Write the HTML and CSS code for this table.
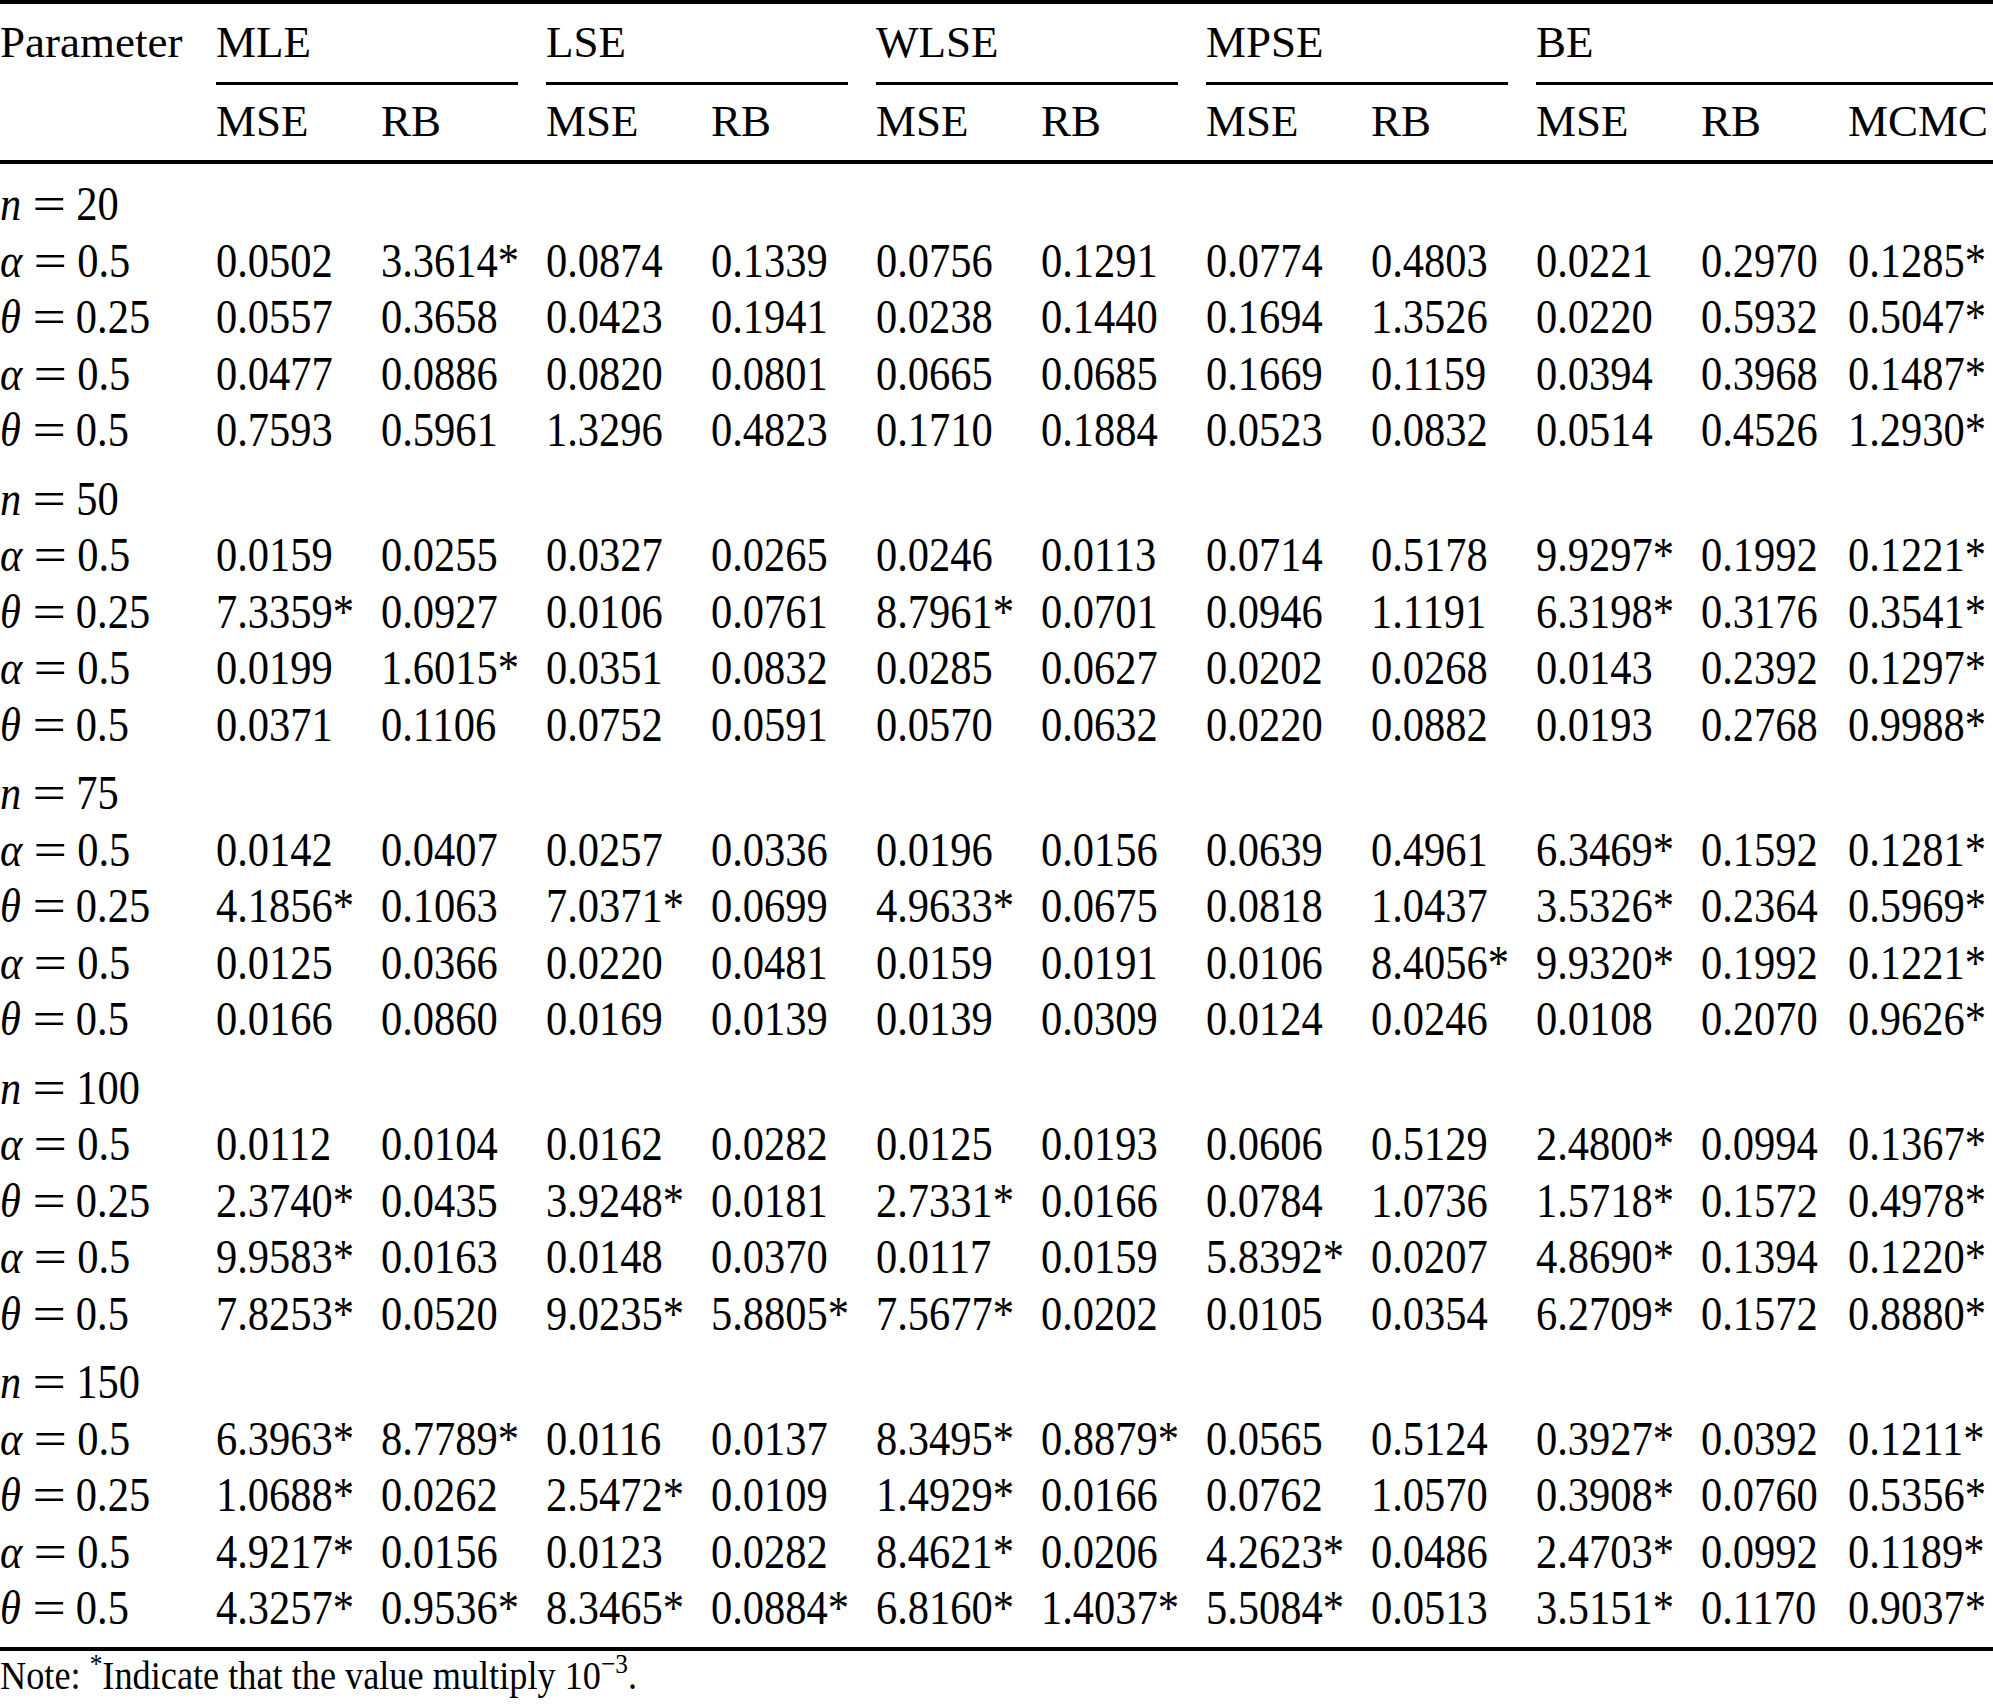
FILE: index.html
```html
<!DOCTYPE html>
<html lang="en">
<head>
    <meta charset="UTF-8">
    <meta name="viewport" content="width=device-width, initial-scale=1.0">
    <title>Simulation Results</title>
    <link rel="stylesheet" href="styles.css">
</head>
<body>
    <table class="results">
        <colgroup>
            <col class="col-param">
            <col class="col-est" span="9">
            <col class="col-rb">
            <col class="col-mcmc">
        </colgroup>
        <thead>
            <tr class="top-head">
                <th class="param-head" rowspan="2">Parameter</th>
                <th colspan="2"><div class="group-label">MLE</div></th>
                <th colspan="2"><div class="group-label">LSE</div></th>
                <th colspan="2"><div class="group-label">WLSE</div></th>
                <th colspan="2"><div class="group-label">MPSE</div></th>
                <th colspan="3"><div class="group-label last">BE</div></th>
            </tr>
            <tr class="sub-head">
                <th>MSE</th><th>RB</th>
                <th>MSE</th><th>RB</th>
                <th>MSE</th><th>RB</th>
                <th>MSE</th><th>RB</th>
                <th>MSE</th><th>RB</th><th>MCMC</th>
            </tr>
        </thead>
        <tbody id="results-body"></tbody>
    </table>
    <p class="note">Note: <sup>*</sup>Indicate that the value multiply 10<sup>&minus;3</sup>.</p>

    <script>
        const params = [["α", "0.5"], ["θ", "0.25"], ["α", "0.5"], ["θ", "0.5"]];

        const groups = [
            { n: 20, rows: [
                ["0.0502", "3.3614*", "0.0874", "0.1339", "0.0756", "0.1291", "0.0774", "0.4803", "0.0221", "0.2970", "0.1285*"],
                ["0.0557", "0.3658", "0.0423", "0.1941", "0.0238", "0.1440", "0.1694", "1.3526", "0.0220", "0.5932", "0.5047*"],
                ["0.0477", "0.0886", "0.0820", "0.0801", "0.0665", "0.0685", "0.1669", "0.1159", "0.0394", "0.3968", "0.1487*"],
                ["0.7593", "0.5961", "1.3296", "0.4823", "0.1710", "0.1884", "0.0523", "0.0832", "0.0514", "0.4526", "1.2930*"]
            ]},
            { n: 50, rows: [
                ["0.0159", "0.0255", "0.0327", "0.0265", "0.0246", "0.0113", "0.0714", "0.5178", "9.9297*", "0.1992", "0.1221*"],
                ["7.3359*", "0.0927", "0.0106", "0.0761", "8.7961*", "0.0701", "0.0946", "1.1191", "6.3198*", "0.3176", "0.3541*"],
                ["0.0199", "1.6015*", "0.0351", "0.0832", "0.0285", "0.0627", "0.0202", "0.0268", "0.0143", "0.2392", "0.1297*"],
                ["0.0371", "0.1106", "0.0752", "0.0591", "0.0570", "0.0632", "0.0220", "0.0882", "0.0193", "0.2768", "0.9988*"]
            ]},
            { n: 75, rows: [
                ["0.0142", "0.0407", "0.0257", "0.0336", "0.0196", "0.0156", "0.0639", "0.4961", "6.3469*", "0.1592", "0.1281*"],
                ["4.1856*", "0.1063", "7.0371*", "0.0699", "4.9633*", "0.0675", "0.0818", "1.0437", "3.5326*", "0.2364", "0.5969*"],
                ["0.0125", "0.0366", "0.0220", "0.0481", "0.0159", "0.0191", "0.0106", "8.4056*", "9.9320*", "0.1992", "0.1221*"],
                ["0.0166", "0.0860", "0.0169", "0.0139", "0.0139", "0.0309", "0.0124", "0.0246", "0.0108", "0.2070", "0.9626*"]
            ]},
            { n: 100, rows: [
                ["0.0112", "0.0104", "0.0162", "0.0282", "0.0125", "0.0193", "0.0606", "0.5129", "2.4800*", "0.0994", "0.1367*"],
                ["2.3740*", "0.0435", "3.9248*", "0.0181", "2.7331*", "0.0166", "0.0784", "1.0736", "1.5718*", "0.1572", "0.4978*"],
                ["9.9583*", "0.0163", "0.0148", "0.0370", "0.0117", "0.0159", "5.8392*", "0.0207", "4.8690*", "0.1394", "0.1220*"],
                ["7.8253*", "0.0520", "9.0235*", "5.8805*", "7.5677*", "0.0202", "0.0105", "0.0354", "6.2709*", "0.1572", "0.8880*"]
            ]},
            { n: 150, rows: [
                ["6.3963*", "8.7789*", "0.0116", "0.0137", "8.3495*", "0.8879*", "0.0565", "0.5124", "0.3927*", "0.0392", "0.1211*"],
                ["1.0688*", "0.0262", "2.5472*", "0.0109", "1.4929*", "0.0166", "0.0762", "1.0570", "0.3908*", "0.0760", "0.5356*"],
                ["4.9217*", "0.0156", "0.0123", "0.0282", "8.4621*", "0.0206", "4.2623*", "0.0486", "2.4703*", "0.0992", "0.1189*"],
                ["4.3257*", "0.9536*", "8.3465*", "0.0884*", "6.8160*", "1.4037*", "5.5084*", "0.0513", "3.5151*", "0.1170", "0.9037*"]
            ]}
        ];

        function label(symbol, value) {
            return `<span class="val"><i>${symbol}</i><span class="eq">=</span>${value}</span>`;
        }

        let html = "";
        groups.forEach(group => {
            html += `<tr class="size-row"><td colspan="12">${label("n", group.n)}</td></tr>`;
            group.rows.forEach((values, i) => {
                const [symbol, value] = params[i];
                html += `<tr><td>${label(symbol, value)}</td>`;
                html += values.map(v => `<td><span class="val">${v}</span></td>`).join("");
                html += `</tr>`;
            });
        });
        document.getElementById("results-body").innerHTML = html;
    </script>
</body>
</html>
```

FILE: styles.css
```css
body {
    margin: 0;
    background: #fff;
    color: #000;
    font-family: "Liberation Serif", "Times New Roman", serif;
}

/* Table */
.results {
    width: 1993px;
    table-layout: fixed;
    border-collapse: separate;
    border-spacing: 0;
    border-top: 4px solid #000;
    border-bottom: 4px solid #000;
}

.col-param { width: 216px; }
.col-est { width: 165px; }
.col-rb { width: 147px; }
.col-mcmc { width: 145px; }

th {
    padding: 0;
    font-size: 45px;
    font-weight: normal;
    line-height: 56px;
    text-align: left;
    white-space: nowrap;
}

.top-head th {
    padding-top: 10px;
    vertical-align: top;
}

.param-head {
    border-bottom: 4px solid #000;
}

.group-label {
    margin-right: 28px;
    padding-bottom: 12px;
    border-bottom: 3px solid #000;
}

.group-label.last {
    margin-right: 0;
}

.sub-head th {
    padding-top: 8px;
    padding-bottom: 11px;
    border-bottom: 4px solid #000;
}

td {
    padding: 0;
    font-size: 48px;
    line-height: 56.5px;
    white-space: nowrap;
}

.val {
    display: inline-block;
    transform: scaleX(0.885);
    transform-origin: 0 50%;
}

/* math-style equals sign, wider than the text one */
.eq {
    display: inline-block;
    padding: 0 17px 0 18px;
    transform: scaleX(1.4);
}

.size-row td {
    padding-top: 12px;
}

tbody tr:last-child td {
    padding-bottom: 10px;
}

/* Footnote */
.note {
    margin: 0;
    padding-top: 3px;
    font-size: 39px;
    line-height: 44px;
    white-space: nowrap;
    transform: scaleX(0.93);
    transform-origin: 0 0;
}

.note sup {
    font-size: 0.7em;
    line-height: 0;
    vertical-align: 0.6em;
}
```
